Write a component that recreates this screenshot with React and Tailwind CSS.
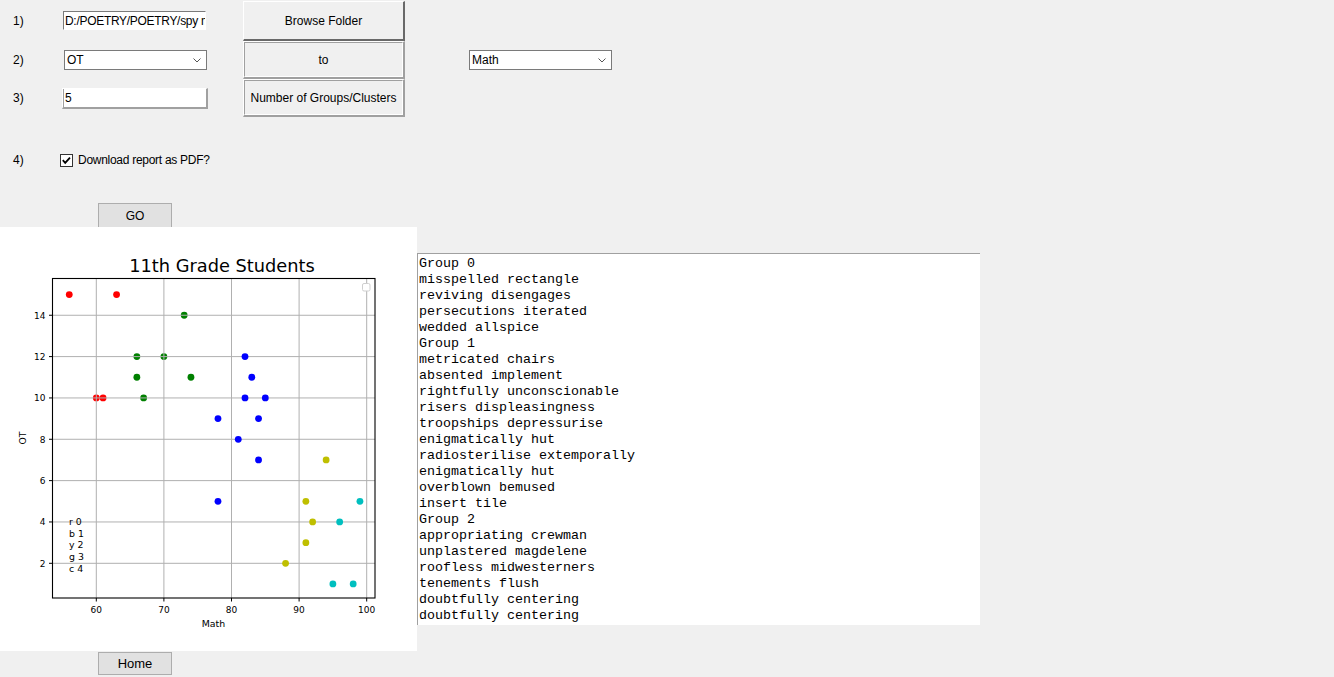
import React from "react";

const X = (v) => 96.3 + (v - 60) * 6.76;
const Y = (v) => 336.3 - (v - 2) * 20.67;

const under = [
  ["#ff0000", [[56, 15], [63, 15], [60, 10], [61, 10]]],
  ["#008000", [[73, 14], [66, 12], [70, 12], [66, 11], [74, 11], [67, 10]]],
];
const over = [
  ["#0000ff", [[82, 12], [83, 11], [82, 10], [85, 10], [78, 9], [84, 9], [81, 8], [84, 7], [78, 5]]],
  ["#bfbf00", [[94, 7], [91, 5], [92, 4], [91, 3], [88, 2]]],
  ["#00bfbf", [[99, 5], [96, 4], [95, 1], [98, 1]]],
];

function Dots({ sets }) {
  return sets.map(([c, pts]) =>
    pts.map(([a, b], i) => <circle key={c + i} cx={X(a)} cy={Y(b)} r={3.4} fill={c} />)
  );
}

function Chart() {
  const xt = [60, 70, 80, 90, 100];
  const yt = [2, 4, 6, 8, 10, 12, 14];
  const L = 52.5, R = 375, T = 51.5, B = 371;
  return (
    <svg width="417" height="424" viewBox="0 0 417 424" style={{ fontFamily: '"DejaVu Sans", sans-serif' }}>
      <text x="222" y="45" fontSize="17.8" textAnchor="middle" fill="#000">11th Grade Students</text>
      <Dots sets={under} />
      {xt.map((v) => (
        <line key={"gx" + v} x1={X(v)} x2={X(v)} y1={T} y2={B} stroke="#b0b0b0" strokeWidth="1" />
      ))}
      {yt.map((v) => (
        <line key={"gy" + v} x1={L} x2={R} y1={Y(v)} y2={Y(v)} stroke="#b0b0b0" strokeWidth="1" />
      ))}
      <Dots sets={over} />
      <rect x={L} y={T} width={R - L} height={B - T} fill="none" stroke="#000" strokeWidth="1.1" />
      {xt.map((v) => (
        <g key={"tx" + v}>
          <line x1={X(v)} x2={X(v)} y1={B} y2={B + 3.5} stroke="#000" strokeWidth="1" />
          <text x={X(v)} y="385.5" fontSize="9" textAnchor="middle" fill="#000">{v}</text>
        </g>
      ))}
      {yt.map((v) => (
        <g key={"ty" + v}>
          <line x1={L - 3.5} x2={L} y1={Y(v)} y2={Y(v)} stroke="#000" strokeWidth="1" />
          <text x="45.5" y={Y(v) + 3.3} fontSize="9" textAnchor="end" fill="#000">{v}</text>
        </g>
      ))}
      <text x="213.5" y="399.7" fontSize="9.4" textAnchor="middle" fill="#000">Math</text>
      <text x="0" y="0" fontSize="9.4" textAnchor="middle" fill="#000" transform="translate(25.5 211) rotate(-90)">OT</text>
      <rect x="362.5" y="56.5" width="7.5" height="7.5" rx="1.5" fill="#fff" stroke="#cfcfcf" strokeWidth="1" />
      {["r 0", "b 1", "y 2", "g 3", "c 4"].map((t, i) => (
        <text key={t} x="69" y={298 + i * 11.7} fontSize="9.4" fill="#000">{t}</text>
      ))}
    </svg>
  );
}

function Chevron() {
  return (
    <svg width="8" height="5" viewBox="0 0 8 5">
      <polyline points="0.5,0.5 4,4 7.5,0.5" fill="none" stroke="#555" strokeWidth="1" />
    </svg>
  );
}

function Combo({ text, cls }) {
  return (
    <div className={"h-[20px] w-[143px] bg-white border border-[#7a7a7a] flex items-center justify-between pl-[2px] pr-[5px] " + cls}>
      <span>{text}</span>
      <Chevron />
    </div>
  );
}

const lines = [
  "Group 0",
  "misspelled rectangle",
  "reviving disengages",
  "persecutions iterated",
  "wedded allspice",
  "Group 1",
  "metricated chairs",
  "absented implement",
  "rightfully unconscionable",
  "risers displeasingness",
  "troopships depressurise",
  "enigmatically hut",
  "radiosterilise extemporally",
  "enigmatically hut",
  "overblown bemused",
  "insert tile",
  "Group 2",
  "appropriating crewman",
  "unplastered magdelene",
  "roofless midwesterners",
  "tenements flush",
  "doubtfully centering",
  "doubtfully centering",
];

export default function App() {
  return (
    <div className="w-[1334px] h-[677px] bg-[#f0f0f0] overflow-hidden font-['Liberation_Sans',Arial,sans-serif] text-[12px] text-black">
      <div className="h-[227px] flex flex-col">
        <div className="flex">
          <div className="flex flex-col">
            <div className="h-[41px] flex items-center">
              <div className="w-[63px] pl-[13px]">1)</div>
              <div className="w-[180px]">
                <div className="w-[143px] h-[19px] bg-white border-l border-t border-[#7a7a7a] border-r border-b border-r-white border-b-white flex items-center pl-[1px] overflow-hidden whitespace-nowrap tracking-[-0.3px]">
                  D:/POETRY/POETRY/spy master
                </div>
              </div>
            </div>
            <div className="h-[38px] flex items-center">
              <div className="w-[63px] pl-[13px]">2)</div>
              <div className="w-[180px]">
                <Combo text="OT" cls="ml-px" />
              </div>
            </div>
            <div className="h-[38px] flex items-center">
              <div className="w-[63px] pl-[13px]">3)</div>
              <div className="w-[180px]">
                <div className="-ml-px w-[146px] h-[21px] bg-white border-l border-t border-white border-r-2 border-b-2 border-r-[#a0a0a0] border-b-[#a0a0a0]">
                  <div className="h-full border-l border-[#a0a0a0] flex items-center pl-[1px]">5</div>
                </div>
              </div>
            </div>
          </div>
          <div className="flex flex-col pt-px w-[162px]">
            <div className="h-[40px] border-l border-t border-white border-r-2 border-b-2 border-r-[#696969] border-b-[#696969] flex items-center justify-center pt-px">
              Browse Folder
            </div>
            <div className="h-[38px] border-l border-t border-white border-r-2 border-b-2 border-r-[#a0a0a0] border-b-[#a0a0a0]">
              <div className="h-full border border-[#a0a0a0] border-r-white border-b-white flex items-center justify-center">to</div>
            </div>
            <div className="h-[38px] border-l border-t border-white border-r-2 border-b-2 border-r-[#a0a0a0] border-b-[#a0a0a0]">
              <div className="h-full border border-[#a0a0a0] border-r-white border-b-white flex items-center justify-center">Number of Groups/Clusters</div>
            </div>
          </div>
          <div className="pl-[64px] pt-[50px]">
            <Combo text="Math" cls="" />
          </div>
        </div>
        <div className="h-[86px] flex items-center">
          <div className="w-[60px] pl-[13px]">4)</div>
          <div className="w-[13px] h-[13px] bg-white border border-[#333] flex items-center justify-center">
            <svg width="11" height="11" viewBox="0 0 11 11">
              <polyline points="1.8,5.2 4.2,7.8 9,2.6" fill="none" stroke="#000" strokeWidth="1.8" />
            </svg>
          </div>
          <div className="pl-[5px] tracking-[-0.28px]">Download report as PDF?</div>
        </div>
        <div className="h-[24px] pl-[98px]">
          <div className="w-[74px] h-[24px] bg-[#e1e1e1] border border-b-0 border-[#adadad] flex items-center justify-center">GO</div>
        </div>
      </div>
      <div className="h-[424px] flex items-center">
        <div className="w-[417px] h-[424px] bg-white">
          <Chart />
        </div>
        <div className="w-[563px] h-[372px] bg-white border-t border-l border-[#a0a0a0] pl-[1px] pt-[2px] font-['Liberation_Mono','Courier_New',monospace] text-[13.33px] leading-[16px] overflow-hidden">
          {lines.map((l, i) => (
            <div key={i} className="whitespace-pre">{l}</div>
          ))}
        </div>
      </div>
      <div className="pt-px pl-[98px]">
        <div className="w-[74px] h-[23px] bg-[#e1e1e1] border border-[#adadad] flex items-center justify-center text-[13px]">Home</div>
      </div>
    </div>
  );
}
